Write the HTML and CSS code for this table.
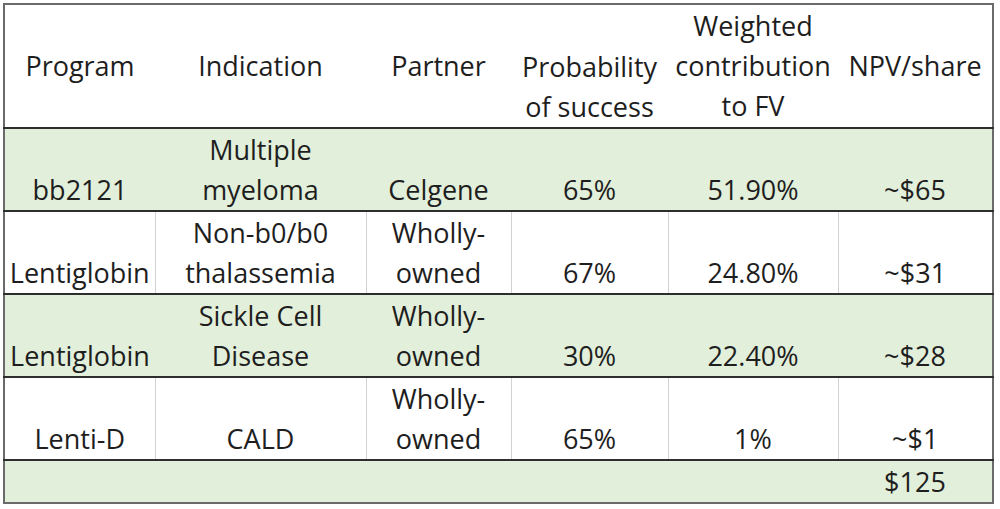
FILE: index.html
```html
<!DOCTYPE html>
<html lang="en">
<head>
<meta charset="utf-8">
<title>Pipeline valuation</title>
<link rel="stylesheet" href="styles.css">
</head>
<body>
<table class="val-table">
  <colgroup>
    <col class="c1"><col class="c2"><col class="c3"><col class="c4"><col class="c5"><col class="c6">
  </colgroup>
  <thead>
    <tr class="head">
      <th>Program</th>
      <th>Indication</th>
      <th>Partner</th>
      <th class="bottom">Probability<br>of success</th>
      <th>Weighted<br>contribution<br>to FV</th>
      <th>NPV/share</th>
    </tr>
  </thead>
  <tbody>
    <tr class="row green">
      <td>bb2121</td>
      <td>Multiple<br>myeloma</td>
      <td>Celgene</td>
      <td>65%</td>
      <td>51.90%</td>
      <td>~$65</td>
    </tr>
    <tr class="row white">
      <td>Lentiglobin</td>
      <td>Non-b0/b0<br>thalassemia</td>
      <td>Wholly-<br>owned</td>
      <td>67%</td>
      <td>24.80%</td>
      <td>~$31</td>
    </tr>
    <tr class="row green">
      <td>Lentiglobin</td>
      <td>Sickle Cell<br>Disease</td>
      <td>Wholly-<br>owned</td>
      <td>30%</td>
      <td>22.40%</td>
      <td>~$28</td>
    </tr>
    <tr class="row white">
      <td>Lenti-D</td>
      <td>CALD</td>
      <td>Wholly-<br>owned</td>
      <td>65%</td>
      <td>1%</td>
      <td>~$1</td>
    </tr>
    <tr class="total green">
      <td></td><td></td><td></td><td></td><td></td>
      <td>$125</td>
    </tr>
  </tbody>
</table>
</body>
</html>
```

FILE: styles.css
```css
html, body {
  margin: 0;
  padding: 0;
  background: #ffffff;
}

body {
  width: 1000px;
  height: 509px;
  overflow: hidden;
  font-family: "Open Sans", "Liberation Sans", sans-serif;
  color: #1e1e1e;
}

.val-table {
  margin: 3px 0 0 3px;
  border-collapse: collapse;
  table-layout: fixed;
  width: 989px;
  border: 2px solid #6a6a6a;
  font-size: 27px;
  line-height: 40px;
}

.c1 { width: 151px; }
.c2 { width: 211px; }
.c3 { width: 145px; }
.c4 { width: 157px; }
.c5 { width: 170px; }
.c6 { width: 155px; }

.val-table th,
.val-table td {
  padding: 0;
  text-align: center;
  font-weight: 400;
  white-space: nowrap;
}

.head th {
  height: 122px;
  vertical-align: middle;
  border-bottom: 2px solid #2e2e2e;
}

.head th.bottom {
  vertical-align: bottom;
}

.row td {
  height: 81px;
  vertical-align: bottom;
  border-bottom: 2px solid #2e2e2e;
}

.white td {
  background: #ffffff;
  border-left: 1px solid #d2d2d2;
  border-right: 1px solid #d2d2d2;
}

.white td:first-child { border-left: 2px solid #6a6a6a; }
.white td:last-child { border-right: 2px solid #6a6a6a; }

.green td {
  background: #e2efda;
}

.total td {
  height: 41px;
  vertical-align: bottom;
}
```
